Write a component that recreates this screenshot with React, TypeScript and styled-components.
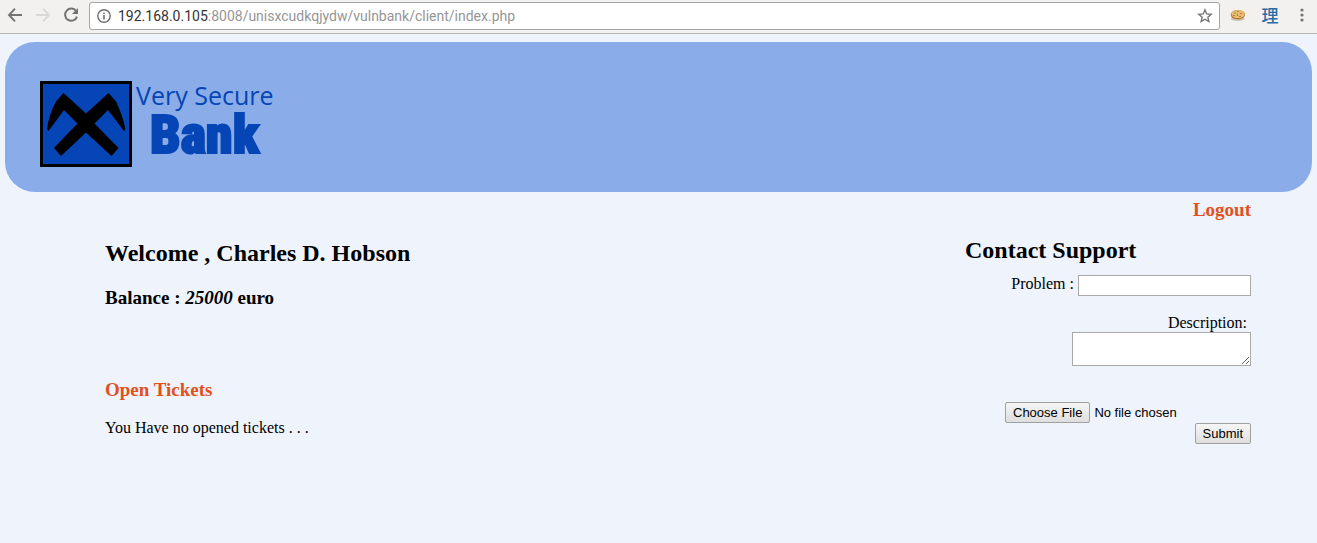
import React from 'react';
import styled, { createGlobalStyle } from 'styled-components';

const GlobalStyle = createGlobalStyle`
  * { box-sizing: border-box; }
  body {
    margin: 0;
    background: #eef3fc;
    color: #000;
    font-family: "Liberation Serif", "Times New Roman", serif;
    font-size: 16px;
    line-height: 18px;
  }
`;

const Toolbar = styled.nav`
  display: flex;
  align-items: center;
  height: 34px;
  padding: 0 7px 3px 7px;
  background: #f2f1f0;
  border-bottom: 1px solid #b6b4b6;
`;

const ToolButton = styled.button<{ $gap?: number; $color?: string }>`
  display: flex;
  align-items: center;
  justify-content: center;
  flex: none;
  width: 16px;
  height: 20px;
  margin: 0 0 0 ${(p) => p.$gap ?? 0}px;
  padding: 0;
  border: 0;
  background: none;
  color: ${(p) => p.$color ?? '#737373'};
  font: 500 17px/20px "Noto Sans CJK SC", sans-serif;
`;

const AddressBar = styled.div`
  display: flex;
  align-items: center;
  flex: 1;
  min-width: 0;
  height: 28px;
  margin: 2px 0 0 10px;
  padding: 0 6px;
  background: #fff;
  border: 1px solid #a6a5a5;
  border-radius: 3px;
`;

const Address = styled.div`
  flex: 1;
  min-width: 0;
  margin-left: 6px;
  overflow: hidden;
  white-space: nowrap;
  color: #969696;
  font: 14px/20px Roboto, sans-serif;
  outline: none;
`;

const Host = styled.span`
  color: #333;
`;

const Banner = styled.header`
  display: flex;
  align-items: center;
  height: 150px;
  margin: 8px 5px 0;
  padding: 14px 35px 0;
  background: #8aace8;
  border-radius: 30px;
`;

const Brand = styled.a`
  display: flex;
  color: #0545b5;
  text-decoration: none;
`;

const BrandText = styled.span`
  display: flex;
  flex-direction: column;
  margin-left: 4px;
`;

const BrandTop = styled.span`
  font: 25px/28px "Open Sans", sans-serif;
`;

const BrandName = styled.span`
  margin-left: 14px;
  font: 900 54px/52px "Roboto Condensed", Roboto, sans-serif;
  -webkit-text-stroke: 2px #0545b5;
`;

const Session = styled.div`
  display: flex;
  justify-content: flex-end;
  padding: 7px 66px 0;
`;

const AccentLink = styled.a`
  color: #e2501c;
  font-size: 19px;
  line-height: 22px;
  font-weight: bold;
  text-decoration: none;
`;

const Main = styled.main`
  display: flex;
  justify-content: space-between;
  align-items: flex-start;
  padding: 0 66px 0 105px;
`;

const Account = styled.section`
  padding-top: 19px;
`;

const Title = styled.h2`
  margin: 0;
  font-size: 24px;
  line-height: 27px;
`;

const Balance = styled.h3`
  margin: 20px 0 0;
  font-size: 19px;
  line-height: 22px;
`;

const TicketsTitle = styled.h3`
  margin: 70px 0 0;
  color: #e2501c;
  font-size: 19px;
  line-height: 22px;
`;

const TicketsText = styled.p`
  margin: 18px 0 0;
`;

const Support = styled.form`
  display: flex;
  flex-direction: column;
  align-items: flex-end;
  width: 286px;
  padding-top: 16px;
`;

const SupportTitle = styled(Title)`
  align-self: flex-start;
`;

const ProblemRow = styled.div`
  display: flex;
  align-items: flex-start;
  gap: 4px;
  margin-top: 11px;
`;

const TextInput = styled.input`
  width: 173px;
  height: 21px;
  padding: 1px;
  border: 1px solid #a9a9a9;
  background: #fff;
  font: 13px "Liberation Sans", sans-serif;
`;

const DescriptionLabel = styled.label`
  margin: 18px 4px 0 0;
`;

const TextArea = styled.textarea`
  display: block;
  width: 179px;
  height: 34px;
  padding: 2px;
  border: 1px solid #a9a9a9;
  background: #fff;
  font: 13px "Liberation Sans", sans-serif;
`;

const buttonLook = `
  height: 21px;
  margin: 0;
  padding: 0 7px;
  border: 1px solid #a0a0a0;
  border-radius: 2px;
  background: linear-gradient(#f6f6f6, #dedede);
  color: #000;
  font: 13px/19px "Liberation Sans", Arial, sans-serif;
`;

const FileInput = styled.input`
  width: 246px;
  height: 21px;
  margin-top: 36px;
  color: #000;
  font: 13px/21px "Liberation Sans", Arial, sans-serif;

  &::file-selector-button {
    ${buttonLook}
    margin-right: 4px;
  }
`;

const SubmitButton = styled.button`
  ${buttonLook}
`;

const Arrow = ({ flip }: { flip?: boolean }) => (
  <svg width="16" height="16" viewBox="0 0 16 16" fill="none" stroke="currentColor" strokeWidth="1.9">
    <path d={flip ? 'M1 8H14M8 1.700L14 8L8 14.300' : 'M15 8H2M8 1.700L2 8L8 14.300'} />
  </svg>
);

const Reload = () => (
  <svg width="16" height="16" viewBox="0 0 16 16">
    <path d="M13.2 4.2A6.1 6.1 0 1 0 14 9.6" fill="none" stroke="currentColor" strokeWidth="2" />
    <path d="M15 1V7H9Z" fill="currentColor" />
  </svg>
);

const Info = () => (
  <svg width="16" height="16" viewBox="0 0 16 16" fill="none" stroke="#6e6e6e">
    <circle cx="8" cy="8" r="6.2" strokeWidth="1.4" />
    <path d="M8 7V11.5M8 4.500V6.100" strokeWidth="1.6" />
  </svg>
);

const Star = () => (
  <svg width="16" height="16" viewBox="0 0 16 16" fill="none" stroke="currentColor" strokeWidth="1.3">
    <path d="M8 1.8L9.7 6L14.2 6.3L10.8 9.2L11.9 13.6L8 11.2L4.1 13.6L5.2 9.2L1.8 6.3L6.3 6Z" />
  </svg>
);

const Cookie = () => (
  <svg width="16" height="16" viewBox="0 0 16 16">
    <ellipse cx="7.6" cy="11.6" rx="7" ry="2.4" fill="#c9c5bd" />
    <path d="M.8 7.6C1 5 4.2 3 8 3C12 3 15 4.8 15 7.3C15.2 10.3 12 12.4 8 12.5C4.5 12.5.8 11 .8 7.6Z" fill="#b97826" />
    <ellipse cx="8" cy="7" rx="6.6" ry="4.1" fill="#e8bd70" />
    <path d="M4.500 6H5.500M7.500 4.500H8.500M10.500 6.500H11.500M7 8H8M9.500 9.500H10.500M3.500 8.500H4.500" stroke="#71481e" />
  </svg>
);

const Dots = () => (
  <svg width="16" height="16" viewBox="0 0 16 16" fill="currentColor">
    <circle cx="8" cy="3" r="1.6" />
    <circle cx="8" cy="8" r="1.6" />
    <circle cx="8" cy="13" r="1.6" />
  </svg>
);

const Emblem = () => (
  <svg width="92" height="86" viewBox="0 0 92 86">
    <rect x="1.5" y="1.5" width="89" height="83" fill="#0545b5" stroke="#000" strokeWidth="3" />
    <path d="M23.500 12L46 32.500L68.500 12L76 20.500Q82.500 34 85.500 48L84 50L68 29L54.500 42.500L78.500 67L71.500 75L46 51.500L21 75L14 67L37.500 42.500L24 29L8.500 50L7 48Q9 33 16 20.500Z" fill="#000" />
  </svg>
);

export default function App() {
  return (
    <>
      <GlobalStyle />
      <Toolbar aria-label="Browser">
        <ToolButton aria-label="Back"><Arrow /></ToolButton>
        <ToolButton aria-label="Forward" $gap={12} $color="#d9d8d7"><Arrow flip /></ToolButton>
        <ToolButton aria-label="Reload" $gap={12}><Reload /></ToolButton>
        <AddressBar>
          <Info />
          <Address role="textbox" aria-label="Address" contentEditable suppressContentEditableWarning spellCheck={false}>
            <Host>192.168.0.105</Host>:8008/unisxcudkqjydw/vulnbank/client/index.php
          </Address>
          <ToolButton aria-label="Bookmark"><Star /></ToolButton>
        </AddressBar>
        <ToolButton aria-label="Cookies" $gap={10}><Cookie /></ToolButton>
        <ToolButton aria-label="Dictionary" $gap={16} $color="#2d6ba6">理</ToolButton>
        <ToolButton aria-label="Menu" $gap={16}><Dots /></ToolButton>
      </Toolbar>

      <Banner>
        <Brand href="#">
          <Emblem />
          <BrandText>
            <BrandTop>Very Secure</BrandTop>
            <BrandName>Bank</BrandName>
          </BrandText>
        </Brand>
      </Banner>

      <Session>
        <AccentLink href="#logout">Logout</AccentLink>
      </Session>

      <Main>
        <Account>
          <Title>Welcome , Charles D. Hobson</Title>
          <Balance>Balance : <em>25000</em> euro</Balance>
          <TicketsTitle>Open Tickets</TicketsTitle>
          <TicketsText>You Have no opened tickets . . .</TicketsText>
        </Account>

        <Support onSubmit={(e) => e.preventDefault()}>
          <SupportTitle>Contact Support</SupportTitle>
          <ProblemRow>
            <label htmlFor="problem">Problem :</label>
            <TextInput id="problem" type="text" />
          </ProblemRow>
          <DescriptionLabel htmlFor="description">Description:</DescriptionLabel>
          <TextArea id="description" />
          <FileInput type="file" aria-label="Attachment" />
          <SubmitButton type="submit">Submit</SubmitButton>
        </Support>
      </Main>
    </>
  );
}
